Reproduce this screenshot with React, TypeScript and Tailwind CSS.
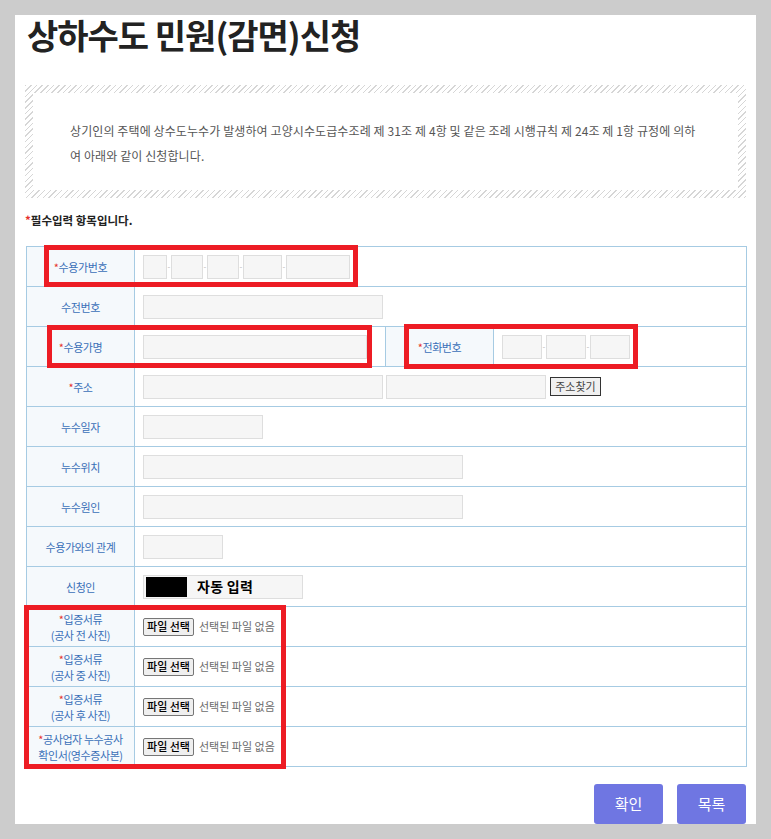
import React from "react";

const label = "bg-[#f5f9fc] border border-[#a6cbe3] text-center text-[11px] tracking-[-0.4px] text-[#3a70b8] leading-[16px] px-1";
const cell = "border border-[#a6cbe3] pl-[8px] pr-2";
const input = "h-[24px] bg-[#f6f6f6] border border-[#dedede] shrink-0";

function Star() {
  return <span className="text-[#e5322d] text-[11px]">*</span>;
}

function Dash() {
  return (
    <span className="w-[4px] flex justify-center text-[8px] text-[#b8b8b8] leading-none">
      -
    </span>
  );
}

function FileField() {
  return (
    <div className="flex items-center gap-[5px]">
      <span className="h-[18px] w-[51px] flex items-center justify-center border border-[#767676] rounded-[2px] bg-[#efefef] text-[11px] font-medium text-black">
        파일 선택
      </span>
      <span className="text-[11px] text-[#6b6b6b]">선택된 파일 없음</span>
    </div>
  );
}

export default function App() {
  const fileRows = [
    ["입증서류", "(공사 전 사진)"],
    ["입증서류", "(공사 중 사진)"],
    ["입증서류", "(공사 후 사진)"],
    ["공사업자 누수공사", "확인서(영수증사본)"],
  ];

  return (
    <div className="h-[839px] overflow-hidden bg-[#cccccc] pt-[15px] pl-[15px] font-['Noto_Sans_CJK_KR',sans-serif]">
      <div className="relative w-[741px] h-[809px] bg-white px-[10px]">
        <h1 className="h-[40px] text-[34px] leading-[40px] font-bold tracking-[-1px] text-[#222] pl-[2px]">
          상하수도 민원(감면)신청
        </h1>

        {/* 안내 박스 */}
        <div className="mt-[30px] h-[113px] p-[8px] bg-[repeating-linear-gradient(135deg,#d6d6d6_0px,#d6d6d6_1px,#ffffff_1px,#ffffff_4px)]">
          <div className="h-full bg-white pl-[37px] pt-[25px] text-[12px] leading-[25px] tracking-[0.1px] text-[#555] whitespace-nowrap">
            상기인의 주택에 상수도누수가 발생하여 고양시수도급수조례 제 31조 제 4항 및 같은 조례 시행규칙 제 24조 제 1항 규정에 의하
            <br />
            여 아래와 같이 신청합니다.
          </div>
        </div>

        <p className="mt-[14px] text-[11.5px] leading-[16px] font-bold text-[#222]">
          <span className="text-[#e5322d]">*</span>필수입력 항목입니다.
        </p>

        <table className="mt-[18px] ml-[1px] w-[720px] border-collapse table-fixed">
          <colgroup>
            <col className="w-[108px]" />
            <col className="w-[251px]" />
            <col className="w-[108px]" />
            <col className="w-[253px]" />
          </colgroup>
          <tbody>
            <tr className="h-[40px]">
              <th className={label + " font-normal"}>
                <Star />수용가번호
              </th>
              <td className={cell} colSpan={3}>
                <div className="flex items-center">
                  <span className={input + " w-[24px]"} />
                  <Dash />
                  <span className={input + " w-[32px]"} />
                  <Dash />
                  <span className={input + " w-[32px]"} />
                  <Dash />
                  <span className={input + " w-[39px]"} />
                  <Dash />
                  <span className={input + " w-[64px]"} />
                </div>
              </td>
            </tr>
            <tr className="h-[40px]">
              <th className={label + " font-normal"}>수전번호</th>
              <td className={cell} colSpan={3}>
                <div className={input + " w-[240px]"} />
              </td>
            </tr>
            <tr className="h-[40px]">
              <th className={label + " font-normal"}>
                <Star />수용가명
              </th>
              <td className={cell}>
                <div className={input + " w-[224px]"} />
              </td>
              <th className={label + " font-normal"}>
                <Star />전화번호
              </th>
              <td className={cell}>
                <div className="flex items-center">
                  <span className={input + " w-[40px]"} />
                  <Dash />
                  <span className={input + " w-[40px]"} />
                  <Dash />
                  <span className={input + " w-[40px]"} />
                </div>
              </td>
            </tr>
            <tr className="h-[40px]">
              <th className={label + " font-normal"}>
                <Star />주소
              </th>
              <td className={cell} colSpan={3}>
                <div className="flex items-center gap-[3px]">
                  <span className={input + " w-[240px]"} />
                  <span className={input + " w-[160px]"} />
                  <span className="ml-[1px] h-[19px] w-[51px] flex items-center justify-center border border-[#333] bg-[#f0f0f0] text-[11px] text-[#444]">
                    주소찾기
                  </span>
                </div>
              </td>
            </tr>
            <tr className="h-[40px]">
              <th className={label + " font-normal"}>누수일자</th>
              <td className={cell} colSpan={3}>
                <div className={input + " w-[120px]"} />
              </td>
            </tr>
            <tr className="h-[40px]">
              <th className={label + " font-normal"}>누수위치</th>
              <td className={cell} colSpan={3}>
                <div className={input + " w-[320px]"} />
              </td>
            </tr>
            <tr className="h-[40px]">
              <th className={label + " font-normal"}>누수원인</th>
              <td className={cell} colSpan={3}>
                <div className={input + " w-[320px]"} />
              </td>
            </tr>
            <tr className="h-[40px]">
              <th className={label + " font-normal"}>수용가와의 관계</th>
              <td className={cell} colSpan={3}>
                <div className={input + " w-[80px]"} />
              </td>
            </tr>
            <tr className="h-[40px]">
              <th className={label + " font-normal"}>신청인</th>
              <td className={cell} colSpan={3}>
                <div className={input + " w-[160px] flex items-center pl-[2px] gap-[10px]"}>
                  <span className="w-[41px] h-[20px] bg-black" />
                  <span className="text-[14px] font-bold text-black tracking-[0.02em]">자동 입력</span>
                </div>
              </td>
            </tr>
            {fileRows.map(([a, b], i) => (
              <tr key={i} className="h-[40px]">
                <th className={label + " font-normal"}>
                  <Star />
                  {a}
                  <br />
                  {b}
                </th>
                <td className={cell} colSpan={3}>
                  <FileField />
                </td>
              </tr>
            ))}
          </tbody>
        </table>

        <div className="mt-[17px] flex justify-end gap-[14px]">
          <button className="w-[69px] h-[40px] rounded-[3px] bg-[#6f76e2] text-white text-[15px]">확인</button>
          <button className="w-[69px] h-[40px] rounded-[3px] bg-[#6f76e2] text-white text-[15px]">목록</button>
        </div>

        {/* 강조 표시 */}
        <div className="pointer-events-none absolute left-[29px] top-[230px] w-[314px] h-[42px] border-[5px] border-[#ed1c24]" />
        <div className="pointer-events-none absolute left-[32px] top-[310px] w-[325px] h-[43px] border-[5px] border-[#ed1c24]" />
        <div className="pointer-events-none absolute left-[389px] top-[309px] w-[234px] h-[45px] border-[5px] border-[#ed1c24]" />
        <div className="pointer-events-none absolute left-[9px] top-[590px] w-[262px] h-[164px] border-[5px] border-[#ed1c24]" />
      </div>
    </div>
  );
}
